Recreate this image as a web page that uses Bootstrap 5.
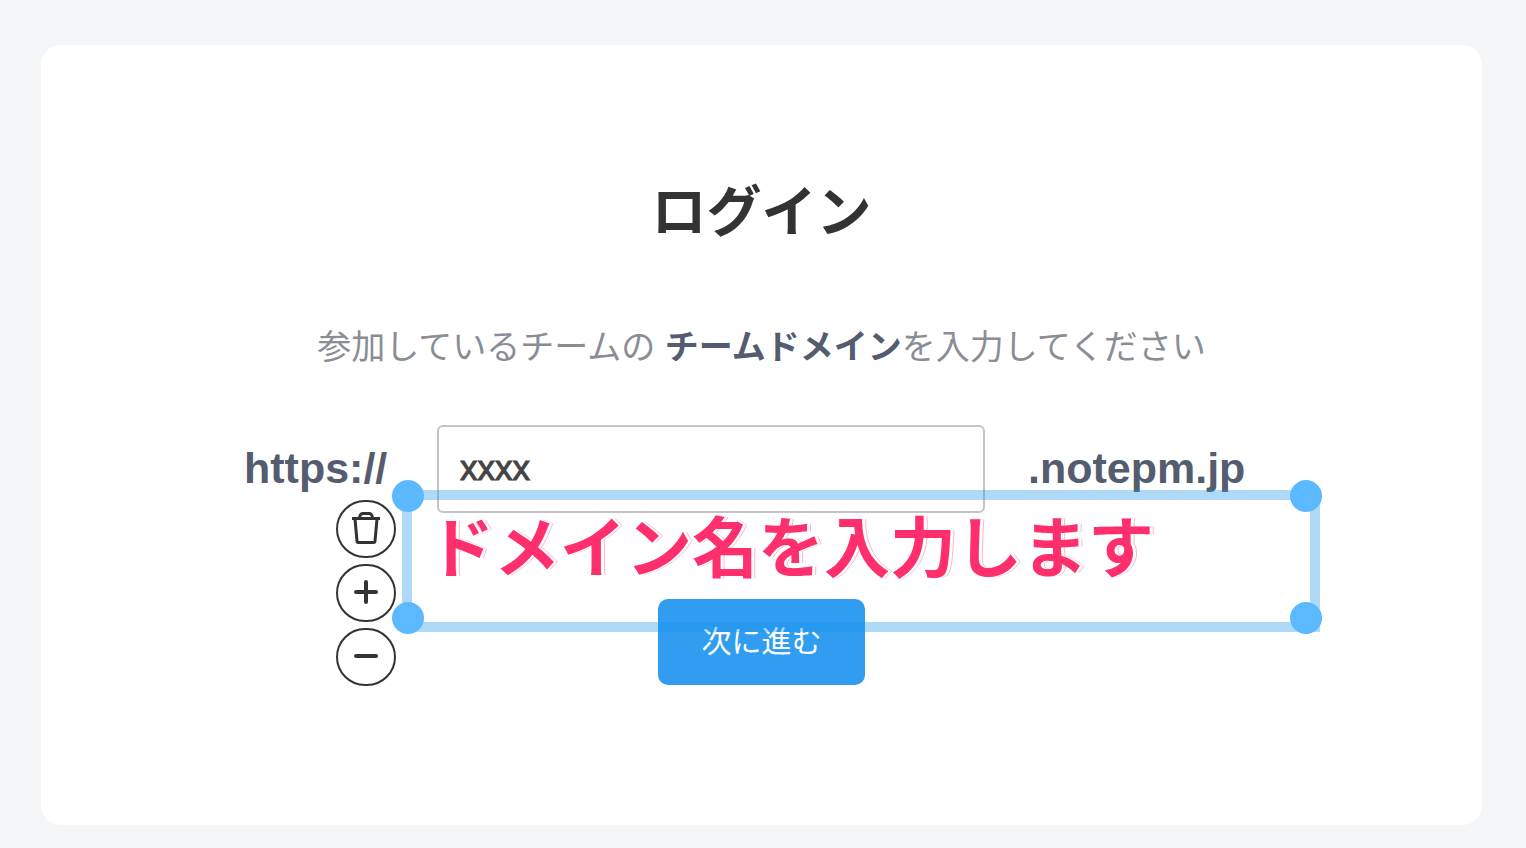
<!DOCTYPE html>
<html lang="ja">
<head>
<meta charset="utf-8">
<meta name="viewport" content="width=device-width, initial-scale=1">
<title>ログイン</title>
<link href="https://cdn.jsdelivr.net/npm/bootstrap@5.3.0/dist/css/bootstrap.min.css" rel="stylesheet">
<style>
  body { background: #f4f6f8; font-family: "Liberation Sans", "Noto Sans CJK JP", sans-serif; color: #333; }
  .page { padding: 45px 44px 23px 41px; }
  .login-card { border-radius: 20px; padding: 134px 24px 140px; }
  .login-title { font-size: 55px; line-height: 66px; font-weight: 700; margin-bottom: 77px; }
  .login-lead { font-size: 34px; line-height: 50px; color: #8a8d94; margin-bottom: 53px; }
  .login-lead strong, .domain-part { color: #545c70; font-weight: 700; }
  .login-form { max-width: 1035px; }
  .domain-row { display: grid; grid-template-columns: 193px 1fr 294px; align-items: center; margin-bottom: 86px; }
  .domain-part { font-size: 43px; line-height: 48px; padding-bottom: 2px; }
  .domain-end { padding-left: 43px; }
  .domain-input { height: 88px; border: 2px solid #c4c4c4; border-radius: 6px; padding: 0 21px 2px; font-size: 35px; color: #444; -webkit-text-stroke: 1px #444; }
  .btn-next { width: 207px; height: 86px; border-radius: 10px; font-size: 30px; line-height: 40px; background: #309df1; color: #fff; border: 0; }
  .btn-next:hover { background: #238fe2; color: #fff; }

  /* annotation drawn over the form */
  .note { top: 65px; left: 158px; width: 918px; height: 142px; border: 10px solid rgba(24, 148, 235, .35); pointer-events: none; }
  .note-text { font-size: 66px; line-height: 98px; font-weight: 700; color: #ff2e6c; padding-left: 16px; text-shadow: 3px 0 #fff, 4px 0 #ffb3c9; }
  .grip { width: 32px; height: 32px; border-radius: 50%; background: #5cb8ff; }
  .grip-l { left: -20px; }
  .grip-r { right: -12px; }
  .grip-t { top: -20px; }
  .grip-b { bottom: -12px; }
  .note-tools { top: 0; left: -76px; gap: 6px; pointer-events: auto; }
  .tool-btn { width: 60px; height: 58px; border: 2px solid #333; border-radius: 29px; background: #fff; color: #333; padding: 0; }
</style>
</head>
<body>
<main class="page">
  <section class="login-card bg-white text-center">
    <h1 class="login-title">ログイン</h1>
    <p class="login-lead">参加しているチームの <strong>チームドメイン</strong>を入力してください</p>
    <form class="login-form position-relative mx-auto">
      <div class="domain-row text-start">
        <label class="domain-part" for="domain">https://</label>
        <input class="domain-input form-control" id="domain" type="text" value="xxxx">
        <span class="domain-part domain-end">.notepm.jp</span>
      </div>
      <button class="btn btn-next" type="submit">次に進む</button>

      <div class="note position-absolute text-start">
        <div class="note-text text-nowrap">ドメイン名を入力します</div>
        <span class="grip grip-l grip-t position-absolute"></span>
        <span class="grip grip-r grip-t position-absolute"></span>
        <span class="grip grip-l grip-b position-absolute"></span>
        <span class="grip grip-r grip-b position-absolute"></span>
        <div class="note-tools position-absolute d-flex flex-column">
          <button class="tool-btn d-flex align-items-center justify-content-center" type="button" aria-label="削除">
            <svg width="32" height="36" viewBox="0 0 32 36" fill="none" stroke="currentColor" stroke-width="3" stroke-linejoin="round"><path d="M2 7.500H30"/><path d="M9.500 7Q10 2.500 13 2.500H19Q22 2.500 22.500 7"/><path d="M5 8L7 30Q7 31.500 8.500 31.500H23.500Q25 31.500 25 30L27 8"/></svg>
          </button>
          <button class="tool-btn d-flex align-items-center justify-content-center" type="button" aria-label="拡大">
            <svg width="24" height="26" viewBox="0 0 24 26" stroke="currentColor" stroke-width="4" stroke-linecap="round"><path d="M2 12H22M12 2V22"/></svg>
          </button>
          <button class="tool-btn d-flex align-items-center justify-content-center" type="button" aria-label="縮小">
            <svg width="24" height="26" viewBox="0 0 24 26" stroke="currentColor" stroke-width="4" stroke-linecap="round"><path d="M2 12H22"/></svg>
          </button>
        </div>
      </div>
    </form>
  </section>
</main>
<script src="https://cdn.jsdelivr.net/npm/bootstrap@5.3.0/dist/js/bootstrap.bundle.min.js"></script>
</body>
</html>
